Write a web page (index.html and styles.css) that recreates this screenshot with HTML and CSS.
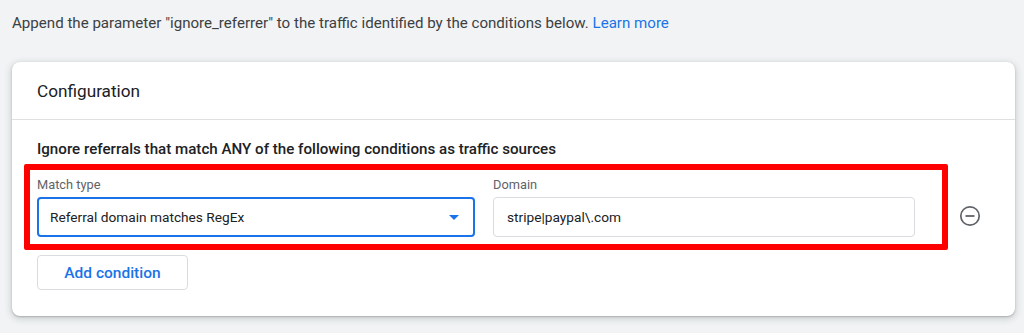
FILE: index.html
```html
<!DOCTYPE html>
<html>
<head>
<meta charset="utf-8">
<link rel="stylesheet" href="styles.css">
</head>
<body>
<p class="intro">Append the parameter "ignore_referrer" to the traffic identified by the conditions below. <a class="link" href="#">Learn more</a></p>
<section class="card">
  <header class="card-header">Configuration</header>
  <div class="card-body">
    <h3 class="heading">Ignore referrals that match ANY of the following conditions as traffic sources</h3>
    <div class="condition-row">
      <div class="highlight">
        <div class="field field-match">
          <label class="label">Match type</label>
          <div class="select">
            <span class="select-text">Referral domain matches RegEx</span>
            <svg class="arrow" width="10" height="5" viewBox="0 0 10 5"><path d="M0 0 L10 0 L5 5 Z" fill="#1a73e8"/></svg>
          </div>
        </div>
        <div class="field field-domain">
          <label class="label">Domain</label>
          <div class="input">stripe|paypal\.com</div>
        </div>
      </div>
      <svg class="remove" width="22" height="22" viewBox="0 0 22 22"><circle cx="11" cy="11" r="9.2" fill="none" stroke="#5f6368" stroke-width="1.7"/><line x1="6.5" y1="11" x2="15.5" y2="11" stroke="#5f6368" stroke-width="1.8"/></svg>
    </div>
    <button class="add-btn">Add condition</button>
  </div>
</section>
</body>
</html>
```

FILE: styles.css
```css
* { box-sizing: border-box; }
html, body { margin: 0; padding: 0; }
body {
  background: #f1f3f4;
  font-family: Roboto, "Noto Sans", Arial, sans-serif;
  color: #3c4043;
  width: 1024px;
  height: 333px;
  overflow: hidden;
}
.intro {
  margin: 0;
  padding: 13px 12px 0;
  font-size: 15.1px;
  line-height: 20px;
  color: #3c4043;
}
.link { color: #1a73e8; text-decoration: none; }
.card {
  margin: 29px 9px 0 12px;
  background: #fff;
  border-radius: 8px;
  box-shadow: 0 1px 2px rgba(60,64,67,.3), 0 2px 6px 2px rgba(60,64,67,.15);
}
.card-header {
  height: 58px;
  display: flex;
  align-items: center;
  padding-left: 25px;
  font-size: 17.2px;
  color: #202124;
  border-bottom: 1px solid #e0e0e0;
}
.card-body {
  padding: 19px 25px 26px;
}
.heading {
  margin: 0 0 5px;
  font-size: 15.15px;
  line-height: 20px;
  font-weight: 500;
  color: #202124;
}
.condition-row {
  display: flex;
  align-items: flex-end;
}
.highlight {
  margin-left: -13px;
  border: 6px solid #ff0000;
  border-radius: 2px;
  padding: 7px 27px 7px 7px;
  display: flex;
  gap: 18px;
}
.field { display: flex; flex-direction: column; gap: 4px; }
.field-match { width: 438px; }
.field-domain { width: 422px; }
.label {
  font-size: 12.8px;
  line-height: 16px;
  color: #5f6368;
}
.select {
  height: 40px;
  border: 2px solid #1a73e8;
  border-radius: 4px;
  display: flex;
  align-items: center;
  justify-content: space-between;
  padding: 0 14px 0 11px;
  font-size: 13.7px;
  color: #202124;
}
.input {
  height: 40px;
  border: 1px solid #dadce0;
  border-radius: 4px;
  display: flex;
  align-items: center;
  padding: 0 13px;
  font-size: 13.7px;
  color: #202124;
}
.remove { margin: 0 0 23px 11px; }
.add-btn {
  margin-top: 5px;
  width: 151px;
  height: 35px;
  background: #fff;
  border: 1px solid #dadce0;
  border-radius: 4px;
  color: #1a73e8;
  font-family: Roboto, "Noto Sans", Arial, sans-serif;
  font-size: 15.5px;
  font-weight: 500;
  padding: 0;
}
```
